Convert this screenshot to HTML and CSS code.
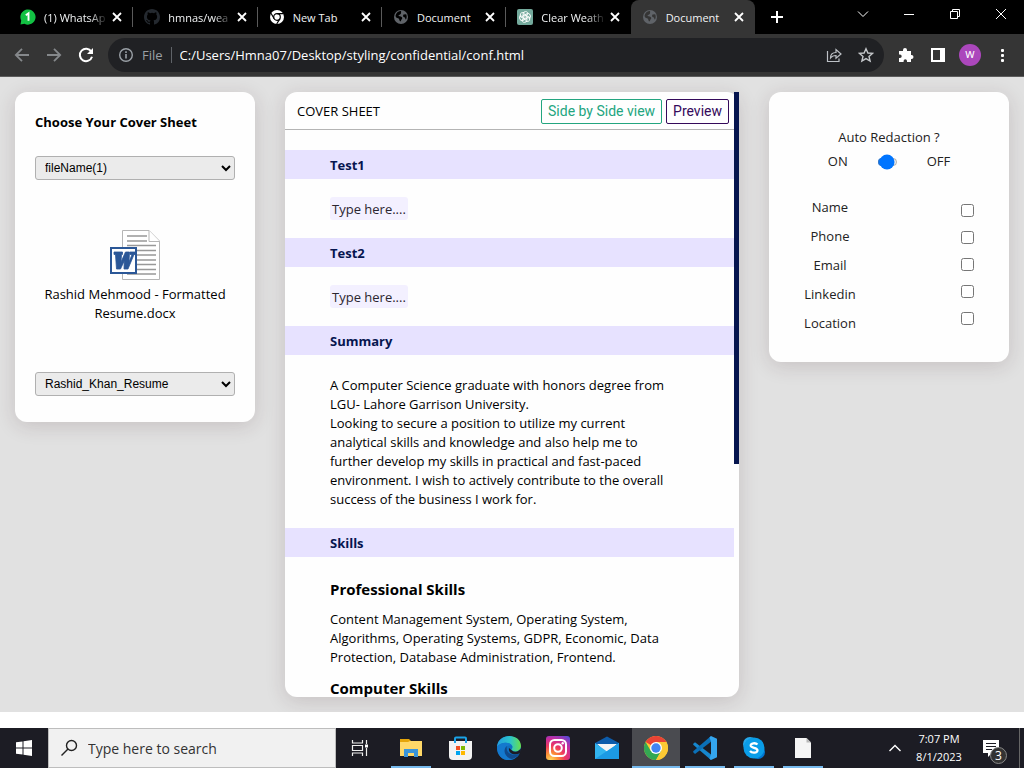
FILE: index.html
```html
<!DOCTYPE html>
<html lang="en">
<head>
<meta charset="utf-8">
<meta name="viewport" content="width=device-width, initial-scale=1">
<title>Document</title>
<link rel="stylesheet" href="styles.css">
</head>
<body>
<svg class="defs" aria-hidden="true">
  <symbol id="globe" viewBox="0 0 16 16">
    <circle cx="8" cy="8" r="7" fill="#5f6368"/>
    <path d="M2.6 6.2C3.4 3.6 5.4 2 8.4 1.800C7.400 3 8.800 3.600 7.700 4.900C6.800 5.900 5.400 5.500 5.600 7.100C7 7.800 8.800 7.300 9.200 8.800C9.500 10.300 8 10.300 7.900 12.300C6.100 12.800 6.900 9.900 5.100 9.200C3.800 8.700 2.400 8.600 2.600 6.200ZM10.500 5.500L13.200 5.200C14 7 13.900 9 12.900 10.600C12 10.400 12.600 8.700 11.400 8.300C10 8 9.700 6.700 10.500 5.500Z" fill="currentColor"/>
  </symbol>
  <symbol id="close" viewBox="0 0 14 14">
    <path d="M3 3L11 11M11 3L3 11" fill="none" stroke="currentColor" stroke-width="1.800"/>
  </symbol>
</svg>
<div class="screen">
  <header class="browser">
    <div class="titlebar">
      <nav class="tabs" aria-label="Tabs">
        <div class="tab">
          <svg class="icon16" viewBox="0 0 16 16"><path d="M0.500 15.500L1.200 11.500A7.600 7.600 0 1 1 4.500 14.800Z" fill="#12c143"/><path d="M5.800 6.300L8.500 4.300V11.700" fill="none" stroke="#fff" stroke-width="1.900"/></svg>
          <span class="tab-title faded">(1) WhatsAp</span>
          <button class="tab-close" aria-label="Close tab"><svg><use href="#close"/></svg></button>
        </div>
        <div class="tab">
          <svg class="icon16" viewBox="0 0 16 16"><path fill="#24292f" d="M8 0C3.580 0 0 3.580 0 8c0 3.540 2.290 6.530 5.470 7.590.4.070.55-.17.55-.38v-1.490c-2.010.37-2.530-.49-2.690-.94-.09-.23-.48-.94-.82-1.130-.28-.15-.68-.52-.01-.53.63-.01 1.080.58 1.230.82.72 1.210 1.870.87 2.330.66.070-.52.28-.87.51-1.070-1.780-.2-3.640-.89-3.640-3.950 0-.87.31-1.590.82-2.150-.08-.2-.36-1.020.08-2.120 0 0 .67-.21 2.200.82a7.600 7.600 0 0 1 4 0c1.530-1.040 2.200-.82 2.200-.82.44 1.100.16 1.920.08 2.120.51.56.82 1.270.82 2.150 0 3.070-1.870 3.750-3.650 3.950.29.25.54.73.54 1.480v2.200c0 .21.15.46.55.38A8 8 0 0 0 16 8c0-4.420-3.580-8-8-8z"/></svg>
          <span class="tab-title faded">hmnas/wea</span>
          <button class="tab-close" aria-label="Close tab"><svg><use href="#close"/></svg></button>
        </div>
        <div class="tab">
          <svg class="icon16" viewBox="0 0 16 16"><circle cx="8" cy="8" r="7" fill="#fff"/><circle cx="8" cy="8" r="3.300" fill="#fff" stroke="#000" stroke-width="1.200"/><path d="M8 4.700H14.500M5.200 9.700L2 4.300M10.900 9.700L7.700 15" stroke="#000" stroke-width="1.200"/></svg>
          <span class="tab-title">New Tab</span>
          <button class="tab-close" aria-label="Close tab"><svg><use href="#close"/></svg></button>
        </div>
        <div class="tab">
          <svg class="icon16 on-black"><use href="#globe"/></svg>
          <span class="tab-title">Document</span>
          <button class="tab-close" aria-label="Close tab"><svg><use href="#close"/></svg></button>
        </div>
        <div class="tab">
          <svg class="icon16" viewBox="0 0 16 16"><rect width="16" height="16" rx="2" fill="#74aa9c"/><g fill="none" stroke="#fff" stroke-width=".9"><path id="petal" d="M6 9.200V5.200C6 1.800 11 1.700 11.200 5L7.800 7"/><use href="#petal" transform="rotate(60 8 8)"/><use href="#petal" transform="rotate(120 8 8)"/><use href="#petal" transform="rotate(180 8 8)"/><use href="#petal" transform="rotate(240 8 8)"/><use href="#petal" transform="rotate(300 8 8)"/></g></svg>
          <span class="tab-title faded">Clear Weath</span>
          <button class="tab-close" aria-label="Close tab"><svg><use href="#close"/></svg></button>
        </div>
        <div class="tab active">
          <svg class="icon16 on-gray"><use href="#globe"/></svg>
          <span class="tab-title">Document</span>
          <button class="tab-close" aria-label="Close tab"><svg><use href="#close"/></svg></button>
        </div>
      </nav>
      <button class="new-tab" aria-label="New tab"><svg width="14" height="14" viewBox="0 0 14 14"><path d="M7 1V13M1 7H13" stroke="#fff" stroke-width="2"/></svg></button>
      <div class="window-controls">
        <button aria-label="Search tabs"><svg width="12" height="12" viewBox="0 0 12 12"><path d="M1 3.500L6 8.500L11 3.500"/></svg></button>
        <button aria-label="Minimize"><svg width="12" height="12" viewBox="0 0 12 12"><path d="M1 6.500H11"/></svg></button>
        <button aria-label="Restore"><svg width="12" height="12" viewBox="0 0 12 12"><path d="M1.500 3.500H8.500V10.500H1.500ZM3.500 3.500V1.500H10.500V8.500H8.500"/></svg></button>
        <button aria-label="Close"><svg width="12" height="12" viewBox="0 0 12 12"><path d="M1 1L11 11M11 1L1 11"/></svg></button>
      </div>
    </div>
    <div class="toolbar">
      <button class="tool dim" aria-label="Back"><svg width="16" height="16" viewBox="0 0 16 16"><path d="M15 8H2M8 1.800L1.800 8L8 14.200" fill="none" stroke="currentColor" stroke-width="1.800"/></svg></button>
      <button class="tool dim" aria-label="Forward"><svg width="16" height="16" viewBox="0 0 16 16"><path d="M1 8H14M8 1.800L14.200 8L8 14.200" fill="none" stroke="currentColor" stroke-width="1.800"/></svg></button>
      <button class="tool" aria-label="Reload"><svg width="16" height="16" viewBox="0 0 16 16"><path d="M13.300 4.600A6.200 6.200 0 1 0 14 9.700" fill="none" stroke="currentColor" stroke-width="2"/><path d="M15 1V7H9Z" fill="currentColor"/></svg></button>
      <div class="omnibox">
        <svg width="16" height="16" viewBox="0 0 16 16"><circle cx="8" cy="8" r="6.300" fill="none" stroke="#9aa0a6" stroke-width="1.400"/><path d="M8 7V11.500M8 4.300V5.900" stroke="#9aa0a6" stroke-width="1.600"/></svg>
        <span class="scheme">File</span>
        <input class="address" type="text" aria-label="Address" value="C:/Users/Hmna07/Desktop/styling/confidential/conf.html">
        <button class="box-icon" aria-label="Share"><svg width="16" height="16" viewBox="0 0 16 16"><path d="M1.500 4V14.500H13V11.500M4.500 11C4.500 7.500 6.500 5.500 10 5.500V2.500L15 7L10 11.300V8.500C7.500 8.500 5.800 9.200 4.500 11Z" fill="none" stroke="#bdc1c6" stroke-width="1.200"/></svg></button>
        <button class="box-icon" aria-label="Bookmark"><svg width="16" height="16" viewBox="0 0 16 16"><path d="M8 1.800L9.900 6L14.500 6.400L11 9.500L12.100 14L8 11.600L3.900 14L5 9.500L1.500 6.400L6.100 6Z" fill="none" stroke="#c4c7ca" stroke-width="1.400"/></svg></button>
      </div>
      <button class="tool" aria-label="Extensions"><svg width="16" height="16" viewBox="0 0 16 16"><path d="M1 4H5V3A2 2 0 0 1 9 3V4H13V8H13.500A2 2 0 0 1 13.500 12H13V15H9V14A1.700 1.700 0 0 0 5.600 14V15H1V11H2A1.700 1.700 0 0 0 2 7.600H1Z" fill="currentColor"/></svg></button>
      <button class="tool" aria-label="Side panel"><svg width="16" height="16" viewBox="0 0 16 16"><path fill-rule="evenodd" d="M1 1H15V15H1ZM3 3V13H10V3Z" fill="currentColor"/></svg></button>
      <button class="tool" aria-label="Profile"><span class="avatar">w</span></button>
      <button class="tool" aria-label="Menu"><svg width="16" height="16" viewBox="0 0 16 16" fill="currentColor"><rect x="7" y="2" width="3" height="3" rx="1"/><rect x="7" y="7" width="3" height="3" rx="1"/><rect x="7" y="12" width="3" height="3" rx="1"/></svg></button>
    </div>
  </header>

  <main class="page">
    <section class="card chooser">
      <label class="chooser-title" for="cover">Choose Your Cover Sheet</label>
      <select id="cover"><option>fileName(1)</option></select>
      <div class="file">
        <svg width="50" height="50" viewBox="0 0 50 50">
          <path d="M12.500 0.500H39L49.500 11V49.500H12.500Z" fill="#fff" stroke="#b5b5b5"/>
          <path d="M39 0.500V11.500H49.500" fill="#fff" stroke="#b5b5b5"/>
          <path d="M17 6H37M17 11H37M17 15.500H46M17 20.500H46M17 25H46M17 30H46M17 34.500H46M17 39.500H46M17 44H46" stroke="#989898" stroke-width="1.700"/>
          <rect x="1" y="18" width="25" height="25" fill="#fff" stroke="#2b5797" stroke-width="2"/>
          <path d="M4 22H12.500V24.500H11.500L11 32L15.500 22H19.500L19 32L22 24.500H20V22H25V24.500H24L18 39H14L14.200 31L10.500 39H6.500L5.500 24.500H4Z" fill="#2b5797" stroke="#2b5797" stroke-width=".8"/>
        </svg>
        <span>Rashid Mehmood - Formatted Resume.docx</span>
      </div>
      <select aria-label="Resume"><option>Rashid_Khan_Resume</option></select>
    </section>

    <section class="card sheet">
      <div class="sheet-body">
        <div class="sheet-head">
          <h1>COVER SHEET</h1>
          <button class="outline green">Side by Side view</button>
          <button class="outline purple">Preview</button>
        </div>
        <h2>Test1</h2>
        <div class="field"><span class="chip" contenteditable="true">Type here....</span></div>
        <h2>Test2</h2>
        <div class="field"><span class="chip" contenteditable="true">Type here....</span></div>
        <h2>Summary</h2>
        <p class="summary">A Computer Science graduate with honors degree from LGU- Lahore Garrison University.<br>Looking to secure a position to utilize my current analytical skills and knowledge and also help me to further develop my skills in practical and fast-paced environment. I wish to actively contribute to the overall success of the business I work for.</p>
        <h2>Skills</h2>
        <div class="skills">
          <h3>Professional Skills</h3>
          <p>Content Management System, Operating System, Algorithms, Operating Systems, GDPR, Economic, Data Protection, Database Administration, Frontend.</p>
          <h3>Computer Skills</h3>
        </div>
      </div>
      <div class="scroll-track"><div class="scroll-thumb"></div></div>
    </section>

    <section class="card redaction">
      <label class="redaction-title" for="auto">Auto Redaction ?</label>
      <div class="switch"><span>ON</span><input id="auto" type="range" min="0" max="100" value="50"><span>OFF</span></div>
      <div class="options">
        <div class="option-labels">
          <label for="o1">Name</label>
          <label for="o2">Phone</label>
          <label for="o3">Email</label>
          <label for="o4">Linkedin</label>
          <label for="o5">Location</label>
        </div>
        <div class="option-checks">
          <input id="o1" type="checkbox">
          <input id="o2" type="checkbox">
          <input id="o3" type="checkbox">
          <input id="o4" type="checkbox">
          <input id="o5" type="checkbox">
        </div>
      </div>
    </section>
  </main>

  <footer class="taskbar">
    <button class="task" aria-label="Start"><svg width="16" height="16" viewBox="0 0 16 16" fill="#fff"><path d="M0 2.300L6.500 1.400V7.500H0ZM7.500 1.200L16 0V7.500H7.500ZM0 8.500H6.500V14.600L0 13.700ZM7.500 8.500H16V16L7.500 14.800Z"/></svg></button>
    <label class="search">
      <svg width="18" height="18" viewBox="0 0 18 18"><circle cx="11.500" cy="6.500" r="5" fill="none" stroke="#222" stroke-width="1.400"/><path d="M8 10L1.500 16.500" stroke="#222" stroke-width="1.400"/></svg>
      <input type="text" placeholder="Type here to search" aria-label="Search">
    </label>
    <button class="task" aria-label="Task view"><svg width="18" height="18" viewBox="0 0 18 18" fill="none" stroke="#eee" stroke-width="1.200"><path d="M1.500 1V4H11.500V1M1.500 17V14H11.500V17M1.500 6.500H11.500V11.500H1.500ZM15.500 1V5M15.500 9V17"/><path d="M14 5.500H17V8.500H14Z" fill="#fff" stroke="none"/></svg></button>
    <nav class="apps" aria-label="Apps">
      <button class="task open" aria-label="File Explorer"><svg width="24" height="24" viewBox="0 0 24 24"><path d="M1 3H10L12 5H23V20H1Z" fill="#e5a50a"/><path d="M1 6H9L11 5H23V20H1Z" fill="#ffd868"/><path d="M5 21V13H19V21H15V17H9V21Z" fill="#3b95d9"/></svg></button>
      <button class="task" aria-label="Store"><svg width="24" height="24" viewBox="0 0 24 24"><path d="M1 5H24V20Q24 24 20 24H5Q1 24 1 20Z" fill="#f3f3f3"/><path d="M7 7V2.500Q7 1.500 8 1.500H17Q18 1.500 18 2.500V7" fill="none" stroke="#1aa3e8" stroke-width="2"/><path d="M8 10H12V14H8Z" fill="#f25022"/><path d="M13 10H17V14H13Z" fill="#7fba00"/><path d="M8 15H12V19H8Z" fill="#00a4ef"/><path d="M13 15H17V19H13Z" fill="#ffb900"/></svg></button>
      <button class="task" aria-label="Edge"><svg width="24" height="24" viewBox="0 0 24 24"><defs><linearGradient id="eg" x1="0" x2="1"><stop offset="0" stop-color="#239de0"/><stop offset=".55" stop-color="#2bc4cb"/><stop offset="1" stop-color="#68df4c"/></linearGradient></defs><circle cx="12" cy="12" r="12" fill="#0f6fc0"/><path d="M0 11C1 -4 24 -3 24 10C24 15 18 17 15 14.500C13.500 13 16 12.500 15.500 10.500C14 6 4 5 0 11Z" fill="url(#eg)"/><path d="M0 11C5 5 13 6 15 10C9 8 6 14 10 19C14 23 20 20 22 18C16 28 0 26 0 11Z" fill="#1479ce"/><path d="M10 10C5 14 8 22 15 23C19 22 21 20 22.500 17.500C16 21 8 17 10 10Z" fill="#114a8b"/><path d="M15 14.500C18 17 22 15.500 23.800 12.500L24 17L22.500 17.500C18 19.500 11 18 12 12Z" fill="#1c1c24"/></svg></button>
      <button class="task" aria-label="Instagram"><svg width="24" height="24" viewBox="0 0 24 24"><defs><radialGradient id="ig" cx=".2" cy="1" r="1.200"><stop offset="0" stop-color="#ffd95a"/><stop offset=".25" stop-color="#fb8c36"/><stop offset=".5" stop-color="#ee3760"/><stop offset=".75" stop-color="#c42da0"/><stop offset="1" stop-color="#5a49d6"/></radialGradient></defs><rect width="24" height="24" rx="3" fill="url(#ig)"/><g fill="none" stroke="#fff" stroke-width="2"><rect x="4" y="4" width="16" height="16" rx="4.500"/><circle cx="12" cy="12" r="3.800"/></g><circle cx="16.700" cy="7.300" r="1.200" fill="#fff"/></svg></button>
      <button class="task" aria-label="Mail"><svg width="24" height="24" viewBox="0 0 24 24"><path d="M0 7L12 0.500L24 7V14H0Z" fill="#0d5cab"/><path d="M2 8H22L12 17Z" fill="#f5f5f5"/><path d="M0 7L12 15.500L24 7V23H0Z" fill="#32b4ef"/><path d="M0 23L24 7V23Z" fill="#1c9ae4"/></svg></button>
      <button class="task open current" aria-label="Chrome"><svg width="24" height="24" viewBox="0 0 24 24"><circle cx="12" cy="12" r="12" fill="#fcc934"/><path d="M12 12L1.600 6A12 12 0 0 1 22.400 6Z" fill="#ea4335"/><path d="M1.600 6A12 12 0 0 0 12 24L17.200 15L6.800 15Z" fill="#34a853"/><path d="M22.400 6H12V12L17.200 15L12 24A12 12 0 0 0 22.400 6Z" fill="#fcc934"/><circle cx="12" cy="12" r="6" fill="#fff"/><circle cx="12" cy="12" r="4.700" fill="#4285f4"/></svg></button>
      <button class="task open" aria-label="Visual Studio Code"><svg width="24" height="24" viewBox="0 0 24 24"><path d="M0 8L2 6.200L18 18.500V24L0.500 9Z" fill="#1687ce"/><path d="M0 16L2 18L18 5.700V0L0.500 15Z" fill="#0b70b8"/><path d="M18 0L24 2.800V21.200L18 24L16.500 22.500L18 18.500V5.500L16.500 1.500Z" fill="#34a5ee"/></svg></button>
      <button class="task open" aria-label="Skype"><svg width="24" height="24" viewBox="0 0 24 24"><circle cx="8" cy="8" r="7" fill="#28a8ea"/><circle cx="16" cy="16" r="7" fill="#0078d4"/><circle cx="12" cy="12" r="10.500" fill="#0a9de8"/><path d="M15.500 8.500C13.500 6.500 8.500 7 8.700 9.700C9 12.500 15.500 11 15.500 14.300C15.300 17.500 9.800 17.300 8 15" fill="none" stroke="#fff" stroke-width="2.300"/></svg></button>
      <button class="task open" aria-label="Document"><svg width="24" height="24" viewBox="0 0 24 24"><path d="M4 2H15.500L20 6.500V22H4Z" fill="#f5f5f5"/><path d="M15.500 2V6.500H20Z" fill="#b9b9b9"/></svg></button>
    </nav>
    <div class="tray">
      <button class="tray-icon" aria-label="Show hidden icons"><svg width="14" height="14" viewBox="0 0 14 14"><path d="M1.500 10L7 4.500L12.500 10" fill="none" stroke="#fff" stroke-width="1.400"/></svg></button>
      <div class="clock"><span>7:07 PM</span><span>8/1/2023</span></div>
      <button class="tray-icon notes" aria-label="Notifications"><svg width="18" height="18" viewBox="0 0 18 18"><path d="M1 1H17V14H10L6 18V14H1Z" fill="#fff"/><path d="M4 4.500H14M4 7.500H14M4 10.500H10" stroke="#1c1c24"/></svg><span class="badge">3</span></button>
      <div class="desktop-edge"></div>
    </div>
  </footer>
</div>
</body>
</html>
```
FILE: styles.css
```css
* { box-sizing: border-box; }

body {
  margin: 0;
  font-family: "Open Sans", "Noto Sans", sans-serif;
  font-size: 13px;
  line-height: 19px;
  color: #000;
}

button {
  margin: 0;
  padding: 0;
  border: 0;
  background: none;
  color: inherit;
  font-family: inherit;
}

svg { display: block; flex: none; }
h1, h2, h3, p { margin: 0; }
.defs { position: absolute; width: 0; height: 0; }

.screen {
  display: flex;
  flex-direction: column;
  height: 100vh;
  background: #fff;
}

/* Browser chrome */
.titlebar {
  display: flex;
  height: 34px;
  background: #000;
  color: #f1f3f4;
}
.tabs { display: flex; flex: 0 1 755px; min-width: 0; padding-left: 9px; }
.tab {
  display: flex;
  flex: 1 1 0;
  align-items: center;
  gap: 8px;
  min-width: 0;
  padding: 0 9px 0 11px;
  font-size: 11px;
  background: linear-gradient(#5a5a5a, #5a5a5a) right center / 1px 20px no-repeat;
}
.tab:nth-child(5) { background: none; }
.tab.active { background: #353535; border-radius: 8px 8px 0 0; }
.icon16 { width: 16px; height: 16px; }
.on-black { color: #000; }
.on-gray { color: #353535; }
.tab-title {
  flex: 1;
  min-width: 0;
  margin-right: -6px;
  white-space: nowrap;
}
.faded {
  -webkit-mask-image: linear-gradient(to right, #000 70%, transparent);
  mask-image: linear-gradient(to right, #000 70%, transparent);
}
.tab-close { flex: none; color: #fff; }
.tab-close svg { width: 14px; height: 14px; }
.new-tab { display: grid; place-items: center; width: 44px; }
.window-controls { display: flex; margin-left: auto; }
.window-controls button {
  display: grid;
  place-items: center;
  width: 46px;
  height: 28px;
}
.window-controls svg { fill: none; stroke: #fff; }

.toolbar {
  display: flex;
  align-items: center;
  height: 43px;
  padding: 0 6px;
  background: #353535;
  border-bottom: 1px solid #5c5c5c;
}
.tool {
  display: grid;
  flex: none;
  place-items: center;
  width: 32px;
  height: 32px;
  color: #fff;
}
.tool.dim { color: #85888b; }
.avatar {
  width: 22px;
  height: 22px;
  border-radius: 50%;
  background: #ab47bc;
  font-size: 12px;
  line-height: 20px;
}
.omnibox {
  display: flex;
  flex: 1;
  align-items: center;
  min-width: 0;
  height: 34px;
  margin: 0 6px;
  padding: 0 10px;
  border-radius: 17px;
  background: #202124;
}
.scheme {
  margin-left: 8px;
  padding-right: 8px;
  border-right: 1px solid #5f6368;
  color: #9aa0a6;
  font-size: 13px;
  line-height: 16px;
}
.address {
  flex: 1;
  min-width: 0;
  padding: 0 8px;
  border: 0;
  outline: 0;
  background: none;
  color: #fff;
  font-family: inherit;
  font-size: 13px;
}
.box-icon { margin-left: 16px; }

/* Page */
.page {
  display: grid;
  flex: 1;
  grid-template-columns: 240px minmax(0, 1fr) 240px;
  grid-template-rows: minmax(0, 1fr);
  align-items: start;
  gap: 30px;
  min-height: 0;
  padding: 15px;
  margin-bottom: 16px;
  background: #e1e1e1;
  overflow: hidden;
}
.card {
  border-radius: 12px;
  background: #fefefe;
  box-shadow: 0 4px 20px rgba(60, 30, 40, 0.16);
}

.chooser {
  display: flex;
  flex-direction: column;
  padding: 21px 20px 26px;
}
.chooser-title { font-size: 13px; font-weight: 700; }
.chooser select {
  height: 24px;
  margin-top: 24px;
  padding: 0 5px;
  border: 1px solid #b0b0b0;
  border-radius: 3px;
  background-color: #ebebeb;
  color: #000;
  font-family: "Liberation Sans", Arial, sans-serif;
  font-size: 12px;
}
.file {
  display: flex;
  flex-direction: column;
  align-items: center;
  gap: 5px;
  margin: 50px 0 25px;
  text-align: center;
}

.sheet {
  display: flex;
  align-self: stretch;
  min-height: 0;
}
.sheet-body {
  flex: 1;
  min-width: 0;
  overflow: hidden;
  border-radius: 12px 0 0 12px;
}
.scroll-track { width: 5px; }
.scroll-thumb { height: 372px; background: #06154f; }
.sheet-head {
  display: flex;
  align-items: center;
  gap: 4px;
  height: 38px;
  margin-bottom: 20px;
  padding: 1px 5px 0 12px;
  border-bottom: 1px solid #b4b4b4;
}
.sheet-head h1 { flex: 1; font-size: 13px; font-weight: 400; }
.outline {
  height: 25px;
  padding: 0 6px;
  border: 1px solid;
  border-radius: 2px;
  font-family: Roboto, Arial, sans-serif;
  font-size: 14px;
}
.green { color: #23a57f; }
.purple { color: #34095a; }
.sheet h2 {
  padding: 6px 45px 4px;
  background: #e7e2ff;
  color: #06154f;
  font-size: 13px;
  font-weight: 700;
  line-height: 19px;
}
.field { display: flex; padding: 18px 45px; }
.chip {
  padding: 3px 2px 1px;
  border-radius: 3px;
  background: #f3f0ff;
  color: #2b2630;
}
.summary { padding: 21px 58px 19px 45px; }
.skills { padding: 21px 45px 0; }
.skills h3 { margin-bottom: 10px; font-size: 15px; line-height: 22px; }
.skills p { margin-bottom: 10px; }

.redaction {
  display: flex;
  flex-direction: column;
  align-items: center;
  padding: 36px 20px 29px;
  color: #222;
}
.switch {
  display: flex;
  align-items: center;
  gap: 29px;
  margin-top: 5px;
}
.switch input { width: 21px; margin: 0; }
.options {
  display: grid;
  grid-template-columns: 1fr 1fr;
  align-self: stretch;
  margin-top: 22px;
}
.option-labels {
  display: flex;
  flex-direction: column;
  align-items: center;
  gap: 10px;
  padding: 5px 18px 0 0;
}
.option-checks {
  display: flex;
  flex-direction: column;
  align-items: flex-end;
  gap: 14px;
  padding: 11px 15px 0 0;
}
.option-checks input { width: 13px; height: 13px; margin: 0; }

/* Taskbar */
.taskbar {
  display: flex;
  height: 40px;
  background: #1c1c24;
  color: #fff;
}
.task {
  display: grid;
  flex: none;
  place-items: center;
  width: 48px;
}
.search {
  display: flex;
  flex: 0 1 288px;
  align-items: center;
  gap: 10px;
  min-width: 0;
  padding: 0 11px;
  border: 1px solid #bdbdbd;
  background: #f1f1f1;
}
.search input {
  flex: 1;
  min-width: 0;
  padding: 0;
  border: 0;
  background: none;
  font-family: inherit;
  font-size: 14px;
}
.search input::placeholder { color: #333; }
.apps { display: flex; gap: 1px; margin-left: 3px; }
.open { background: linear-gradient(#76b9ed, #76b9ed) center bottom / 40px 2px no-repeat; }
.current {
  background-color: #4a4b50;
  background-size: 48px 2px;
}
.tray { display: flex; align-items: center; margin-left: auto; }
.tray-icon { display: grid; place-items: center; width: 24px; height: 40px; }
.clock {
  display: flex;
  flex-direction: column;
  align-items: center;
  width: 64px;
  font-size: 11px;
  line-height: 18px;
}
.notes { position: relative; width: 40px; margin-right: 8px; }
.badge {
  position: absolute;
  right: 4px;
  bottom: 4px;
  width: 17px;
  height: 17px;
  border: 1px solid #888;
  border-radius: 50%;
  background: #333;
  font-size: 12px;
  line-height: 15px;
}
.desktop-edge { width: 5px; height: 40px; border-left: 1px solid #666; }
```
